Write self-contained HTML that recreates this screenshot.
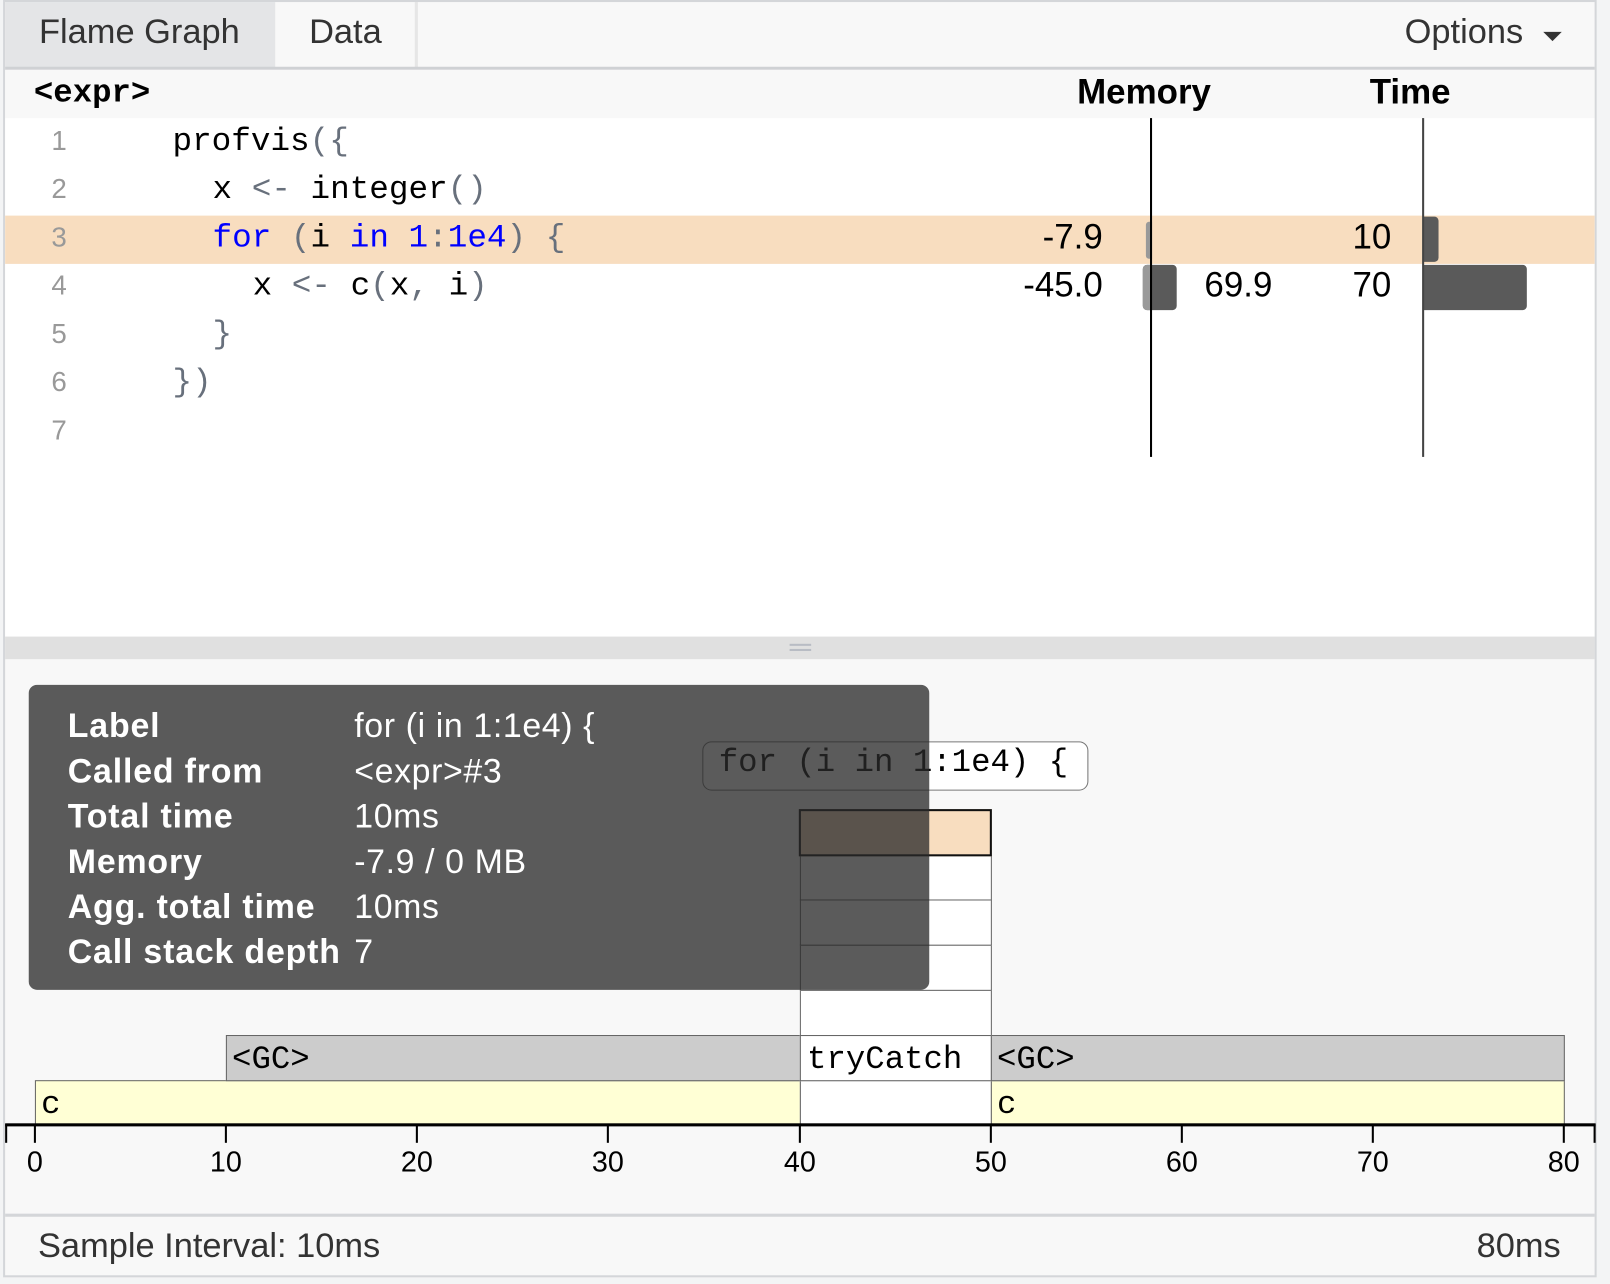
<!DOCTYPE html>
<html><head><meta charset="utf-8"><style>
html,body{margin:0;padding:0;background:#f3f4f5;overflow:hidden;width:1610px;height:1284px}
#w{position:absolute;left:0;top:0;width:1568px;height:1250px;transform:scale(1.02679);transform-origin:0 0;font-family:"Liberation Sans",sans-serif}
.a{position:absolute}
.mono{font-family:"Liberation Mono",monospace}
.code{font-size:31.8px;color:#000;white-space:pre;line-height:47px}
.ln{color:#999;font-size:27px;font-family:"Liberation Sans",sans-serif}
.p{color:#68707c}.k{color:#0000ff}
.num{font-size:34px;color:#000;text-align:right;width:160px}
.tick{position:absolute;top:1095px;width:2px;height:18px;background:#000}
.tl{position:absolute;top:1116px;font-size:28px;width:60px;text-align:center;margin-left:-30px}
.box{position:absolute;border:1px solid #666;box-sizing:border-box}
.tt{font-size:33px;color:#fff;line-height:44px;letter-spacing:0.2px}
.fl{font-size:31.5px}
</style></head><body><div id="w">
<div class="a" style="left:3px;top:0;width:1552px;height:1244px;background:#f8f8f8;border:2px solid #d4d6d9;box-sizing:border-box"></div>
<div class="a" style="left:5px;top:2px;width:263px;height:64px;background:#e4e5e7"></div>
<div class="a" style="left:404px;top:2px;width:3px;height:64px;background:#e6e6e6"></div>
<div class="a" style="left:38px;top:13px;font-size:33.5px;color:#333">Flame Graph</div>
<div class="a" style="left:301px;top:13px;font-size:33.5px;color:#333">Data</div>
<div class="a" style="left:1368px;top:13px;font-size:33.5px;color:#333">Options</div>
<div class="a" style="left:1503px;top:31px;border-left:9px solid transparent;border-right:9px solid transparent;border-top:9px solid #333"></div>
<div class="a" style="left:5px;top:65px;width:1548px;height:3px;background:#cfd1d4"></div>
<div class="a" style="left:5px;top:68px;width:1548px;height:47px;background:#f8f8f8"></div>
<div class="a mono" style="left:33px;top:74px;font-size:31.5px;font-weight:bold">&lt;expr&gt;</div>
<div class="a" style="left:1049px;top:71px;font-size:34px;font-weight:bold">Memory</div>
<div class="a" style="left:1334px;top:71px;font-size:34px;font-weight:bold">Time</div>
<div class="a" style="left:5px;top:115px;width:1548px;height:505px;background:#fff"></div>
<div class="a" style="left:5px;top:210px;width:1548px;height:47px;background:#f8ddbf"></div>
<div class="a" style="left:0;top:115px">
<div class="a ln" style="left:50px;top:7px">1</div>
<div class="a ln" style="left:50px;top:54px">2</div>
<div class="a ln" style="left:50px;top:101px">3</div>
<div class="a ln" style="left:50px;top:148px">4</div>
<div class="a ln" style="left:50px;top:195px">5</div>
<div class="a ln" style="left:50px;top:242px">6</div>
<div class="a ln" style="left:50px;top:289px">7</div>
<div class="a mono code" style="left:168px;top:0">profvis<span class="p">({</span></div>
<div class="a mono code" style="left:207px;top:47px">x <span class="p">&lt;-</span> integer<span class="p">()</span></div>
<div class="a mono code" style="left:207px;top:94px"><span class="k">for</span> <span class="p">(</span>i <span class="k">in</span> <span class="k">1</span><span class="p">:</span><span class="k">1e4</span><span class="p">)</span> <span class="p">{</span></div>
<div class="a mono code" style="left:246px;top:141px">x <span class="p">&lt;-</span> c<span class="p">(</span>x<span class="p">,</span> i<span class="p">)</span></div>
<div class="a mono code" style="left:207px;top:188px"><span class="p">}</span></div>
<div class="a mono code" style="left:168px;top:235px"><span class="p">})</span></div>
</div>
<div class="a num" style="left:914px;top:212px">-7.9</div>
<div class="a num" style="left:1195px;top:212px">10</div>
<div class="a num" style="left:914px;top:259px">-45.0</div>
<div class="a" style="left:1173px;top:259px;font-size:34px">69.9</div>
<div class="a num" style="left:1195px;top:259px">70</div>
<div class="a" style="left:1116px;top:216px;width:6px;height:36px;background:#999;border-radius:3px 0 0 3px"></div>
<div class="a" style="left:1113px;top:258px;width:33px;height:44px;background:#5a5a5a;border-radius:4px"></div>
<div class="a" style="left:1113px;top:258px;width:8px;height:44px;background:#999;border-radius:4px 0 0 4px"></div>
<div class="a" style="left:1386px;top:211px;width:15px;height:44px;background:#5a5a5a;border-radius:0 4px 4px 0"></div>
<div class="a" style="left:1386px;top:258px;width:101px;height:44px;background:#5a5a5a;border-radius:0 4px 4px 0"></div>
<div class="a" style="left:1120px;top:115px;width:2px;height:330px;background:#000"></div>
<div class="a" style="left:1385px;top:115px;width:2px;height:330px;background:#444"></div>
<div class="a" style="left:5px;top:620px;width:1548px;height:22px;background:#e0e0e0"></div>
<div class="a" style="left:769px;top:627px;width:21px;height:2px;background:#b8bcc4"></div>
<div class="a" style="left:769px;top:632px;width:21px;height:2px;background:#b8bcc4"></div>
<div class="box" style="left:34px;top:1052px;width:746px;height:44px;background:#ffffd5"></div>
<div class="box" style="left:779px;top:1052px;width:187px;height:44px;background:#fff"></div>
<div class="box" style="left:965px;top:1052px;width:559px;height:44px;background:#ffffd5"></div>
<div class="box" style="left:220px;top:1008px;width:560px;height:45px;background:#ccc"></div>
<div class="box" style="left:779px;top:1008px;width:187px;height:45px;background:#fff"></div>
<div class="box" style="left:965px;top:1008px;width:559px;height:45px;background:#ccc"></div>
<div class="box" style="left:779px;top:964px;width:187px;height:45px;background:#fff"></div>
<div class="box" style="left:779px;top:920px;width:187px;height:45px;background:#fff"></div>
<div class="box" style="left:779px;top:876px;width:187px;height:45px;background:#fff"></div>
<div class="box" style="left:779px;top:832px;width:187px;height:45px;background:#fff"></div>
<div class="box" style="left:778px;top:788px;width:188px;height:46px;background:#f8ddbf;border:2px solid #111"></div>
<div class="a mono fl" style="left:40px;top:1059px">c</div>
<div class="a mono fl" style="left:971px;top:1059px">c</div>
<div class="a mono fl" style="left:226px;top:1015px">&lt;GC&gt;</div>
<div class="a mono fl" style="left:971px;top:1015px">&lt;GC&gt;</div>
<div class="a mono fl" style="left:786px;top:1015px">tryCatch</div>
<div class="a mono" style="left:684px;top:722px;width:376px;height:48px;border:1.5px solid #777;border-radius:9px;box-sizing:border-box;background:#fff;font-size:31.5px;padding:3px 0 0 15px;white-space:pre">for (i in 1:1e4) {</div>
<div class="a" style="left:5px;top:1094px;width:1549px;height:3px;background:#000"></div>
<div class="tick" style="left:5px"></div><div class="tick" style="left:1552px"></div>
<div class="tick" style="left:33px"></div><div class="tl" style="left:34px">0</div>
<div class="tick" style="left:219px"></div><div class="tl" style="left:220px">10</div>
<div class="tick" style="left:405px"></div><div class="tl" style="left:406px">20</div>
<div class="tick" style="left:591px"></div><div class="tl" style="left:592px">30</div>
<div class="tick" style="left:778px"></div><div class="tl" style="left:779px">40</div>
<div class="tick" style="left:964px"></div><div class="tl" style="left:965px">50</div>
<div class="tick" style="left:1150px"></div><div class="tl" style="left:1151px">60</div>
<div class="tick" style="left:1336px"></div><div class="tl" style="left:1337px">70</div>
<div class="tick" style="left:1522px"></div><div class="tl" style="left:1523px">80</div>
<div class="a" style="left:28px;top:667px;width:877px;height:297px;background:rgba(42,42,42,0.77);border-radius:8px"></div>
<div class="a tt" style="left:66px;top:685px;font-weight:bold;letter-spacing:0.8px">Label<br>Called from<br>Total time<br>Memory<br>Agg. total time<br>Call stack depth</div>
<div class="a tt" style="left:345px;top:685px;letter-spacing:0.6px">for (i in 1:1e4) {<br>&lt;expr&gt;#3<br>10ms<br>-7.9 / 0 MB<br>10ms<br>7</div>
<div class="a" style="left:5px;top:1182px;width:1548px;height:3px;background:#d4d6d9"></div>
<div class="a" style="left:37px;top:1195px;font-size:33.5px;color:#333">Sample Interval: 10ms</div>
<div class="a" style="left:1320px;top:1195px;width:200px;text-align:right;font-size:33.5px;color:#333">80ms</div>
</div></body></html>
